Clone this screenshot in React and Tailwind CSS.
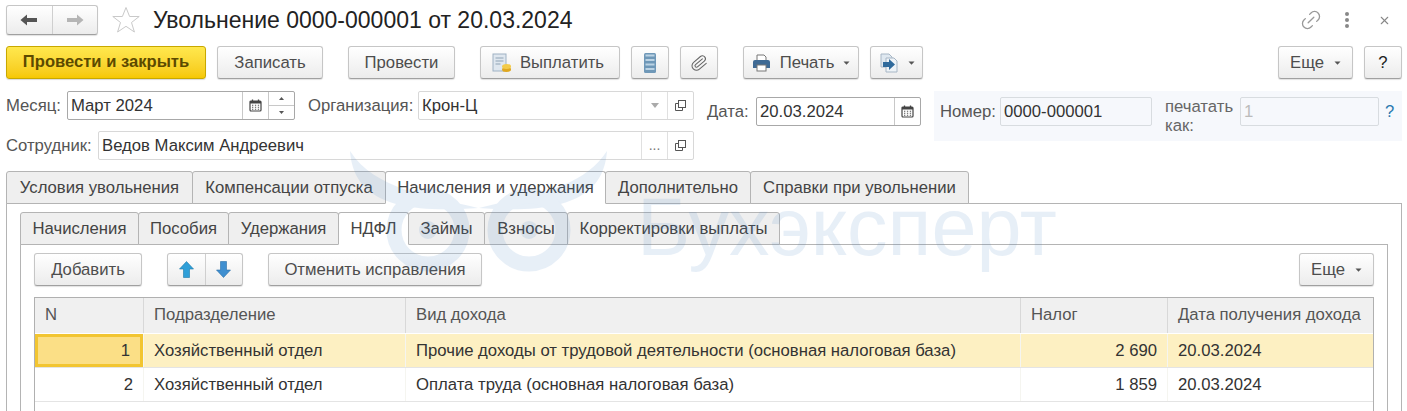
import { Link2, Paperclip, X } from "lucide-react";

const Caret = ({ className = "" }) => (
  <svg width="7" height="4" viewBox="0 0 7 4" className={className}>
    <path d="M0.5 0.5h6L3.5 3.8z" fill="#555" />
  </svg>
);

const Btn = ({ className = "", children }) => (
  <div
    className={`h-[33px] flex items-center justify-center shrink-0 rounded-[3px] border border-[#c6c6c6] border-b-[#a0a0a0] bg-gradient-to-b from-white to-[#ececec] text-[#4d4d4d] shadow-[0_1px_1px_rgba(0,0,0,0.12)] ${className}`}
  >
    {children}
  </div>
);

const CalendarIcon = () => (
  <svg width="13" height="13" viewBox="0 0 13 13">
    <rect x="1" y="2" width="11" height="10" rx="1" fill="none" stroke="#444" strokeWidth="1.2" />
    <rect x="1" y="2" width="11" height="2.5" fill="#444" />
    <path d="M3.5 0.5v2.5M9.5 0.5v2.5" stroke="#444" strokeWidth="1.3" />
    <path d="M3 6.2h1.3M5.9 6.2h1.3M8.8 6.2h1.3M3 8.2h1.3M5.9 8.2h1.3M8.8 8.2h1.3M3 10.2h1.3M5.9 10.2h1.3M8.8 10.2h1.3" stroke="#555" strokeWidth="1.1" />
  </svg>
);

const OpenIcon = () => (
  <svg width="13" height="13" viewBox="0 0 13 13" fill="none" stroke="#555" strokeWidth="1">
    <rect x="4.5" y="1.5" width="7" height="7" />
    <path d="M4.5 4.5h-3v7h7v-3" />
  </svg>
);

const Label = ({ className = "", children }) => (
  <span className={`text-[#555] shrink-0 ${className}`}>{children}</span>
);

const tabsOuter = [
  { name: "Условия увольнения", w: "w-[187px]" },
  { name: "Компенсации отпуска", w: "w-[194px]" },
  { name: "Начисления и удержания", w: "w-[221px]", active: true },
  { name: "Дополнительно", w: "w-[146px]" },
  { name: "Справки при увольнении", w: "w-[219px]" },
];

const tabsInner = [
  { name: "Начисления", w: "w-[119px]" },
  { name: "Пособия", w: "w-[91px]" },
  { name: "Удержания", w: "w-[111px]" },
  { name: "НДФЛ", w: "w-[71px]", active: true },
  { name: "Займы", w: "w-[77px]" },
  { name: "Взносы", w: "w-[84px]" },
  { name: "Корректировки выплаты", w: "w-[213px]" },
];

const Tab = ({ name, w, active }) => (
  <div
    className={`h-[33px] -mr-px shrink-0 flex items-center justify-center rounded-t-[3px] border border-[#b4b4b4] text-[#444] ${w} ${
      active ? "bg-white border-b-white relative z-10" : "bg-[#efefef]"
    }`}
  >
    {name}
  </div>
);

const rows = [
  {
    n: 1,
    dep: "Хозяйственный отдел",
    kind: "Прочие доходы от трудовой деятельности (основная налоговая база)",
    tax: "2 690",
    date: "20.03.2024",
    active: true,
  },
  {
    n: 2,
    dep: "Хозяйственный отдел",
    kind: "Оплата труда (основная налоговая база)",
    tax: "1 859",
    date: "20.03.2024",
  },
];

// полупрозрачный водяной знак поверх формы
const Watermark = () => (
  <div className="absolute inset-0 pointer-events-none z-20 opacity-[0.12] text-[#3f7fc4]">
    <svg width="270" height="125" viewBox="0 0 270 125" fill="none" className="absolute left-[345px] top-[150px]">
      <path d="M5 1C8 38 32 66 133 58C85 46 30 40 5 1z" fill="#3f7fc4" />
      <path d="M262 1C259 38 235 66 134 58C182 46 237 40 262 1z" fill="#3f7fc4" />
      <circle cx="83" cy="80" r="34" stroke="#3f7fc4" strokeWidth="15" />
      <circle cx="184" cy="80" r="34" stroke="#3f7fc4" strokeWidth="15" />
      <circle cx="83" cy="80" r="9" fill="#3f7fc4" />
      <circle cx="184" cy="80" r="9" fill="#3f7fc4" />
    </svg>
    <span className="absolute left-[637px] top-[187px] text-[81px] leading-none whitespace-nowrap">Бухэксперт</span>
  </div>
);

export default function App() {
  return (
    <div className="relative w-[1407px] h-[411px] overflow-hidden bg-white font-['Liberation_Sans',Arial,sans-serif] text-[16.7px] text-[#333]">
      <Watermark />

      {/* header */}
      <div className="flex items-center h-[30px] mt-[5px] pl-[6px]">
        <div className="flex h-[30px] w-[92px] rounded-[3px] border border-[#c6c6c6] border-b-[#a0a0a0] bg-gradient-to-b from-white to-[#ececec] shadow-[0_1px_1px_rgba(0,0,0,0.12)]">
          <div className="flex-1 flex items-center justify-center border-r border-[#cfcfcf]">
            <svg width="18" height="12" viewBox="0 0 18 12"><path d="M0.5 6L7 0.5V4H17V8H7V11.5z" fill="#555" /></svg>
          </div>
          <div className="flex-1 flex items-center justify-center">
            <svg width="18" height="12" viewBox="0 0 18 12"><path d="M17.5 6L11 0.5V4H1V8H11V11.5z" fill="#b5b5b5" /></svg>
          </div>
        </div>
        <svg width="30" height="28" viewBox="0 0 30 28" className="ml-[13px]" fill="none">
          <path d="M15 1.5l3.6 9h9.6l-7.7 6 2.9 9.5-8.4-5.7-8.4 5.7 2.9-9.5-7.7-6h9.6z" stroke="#c9c9c9" />
        </svg>
        <div className="ml-[12px] text-[23px] leading-none text-[#222]">Увольнение 0000-000001 от 20.03.2024</div>
        <div className="ml-auto flex items-center pr-[16px]">
          <Link2 size={24} strokeWidth={1.3} color="#999" className="-rotate-45" />
          <div className="ml-[22px] flex flex-col gap-[2px]">
            <span className="w-[4px] h-[4px] rounded-full bg-[#888]" />
            <span className="w-[4px] h-[4px] rounded-full bg-[#888]" />
            <span className="w-[4px] h-[4px] rounded-full bg-[#888]" />
          </div>
          <X size={13} strokeWidth={2} color="#888" className="ml-[29px]" />
        </div>
      </div>

      {/* command bar */}
      <div className="flex mt-[11px] pl-[6px] pr-[5px]">
        <div className="w-[200px] h-[33px] flex items-center justify-center rounded-[3px] border border-[#c8a800] bg-gradient-to-b from-[#ffe84d] to-[#f6c800] font-bold text-[16.6px] text-[#5c4a00] shadow-[0_1px_1px_rgba(0,0,0,0.15)]">
          Провести и закрыть
        </div>
        <Btn className="w-[106px] ml-[11px]">Записать</Btn>
        <Btn className="w-[107px] ml-[25px]">Провести</Btn>
        <Btn className="w-[140px] ml-[25px] gap-[8px] pr-[4px]">
          <svg width="20" height="20" viewBox="0 0 20 20">
            <rect x="1" y="1" width="13" height="17" fill="#dfe7ef" stroke="#9fb2c4" />
            <path d="M3.5 5h8M3.5 8h8M3.5 11h5" stroke="#8fa3b5" />
            <ellipse cx="14.5" cy="16.5" rx="4.5" ry="2.5" fill="#e0a820" />
            <ellipse cx="14.5" cy="13.5" rx="4.5" ry="2.5" fill="#f3cb4a" />
          </svg>
          Выплатить
        </Btn>
        <Btn className="w-[38px] ml-[11px]">
          <svg width="12" height="20" viewBox="0 0 12 20">
            <rect x="0" y="0" width="12" height="20" rx="1.5" fill="#6f98b8" />
            <path d="M1.5 2.5h9M1.5 7h9M1.5 11.5h9M1.5 16h9" stroke="#bcd3e4" strokeWidth="2" />
          </svg>
        </Btn>
        <Btn className="w-[38px] ml-[11px]">
          <Paperclip size={18} strokeWidth={1.4} color="#666" className="rotate-[5deg]" />
        </Btn>
        <Btn className="w-[116px] ml-[25px]">
          <svg width="19" height="18" viewBox="0 0 19 18" className="mr-[9px]">
            <path d="M5 1h7l2 2v4H5z" fill="#fff" stroke="#777" />
            <path d="M1 8q0-2 2-2h13q2 0 2 2v6H1z" fill="#3f6a94" />
            <rect x="5" y="11" width="9" height="6" fill="#fff" stroke="#777" />
          </svg>
          Печать
          <Caret className="ml-[9px]" />
        </Btn>
        <Btn className="w-[53px] ml-[11px]">
          <svg width="20" height="20" viewBox="0 0 20 20" className="mr-[9px]">
            <path d="M2 1h8l3 3v10H2z" fill="#dfe8f0" stroke="#a7b6c5" />
            <path d="M7 5h8l3 3v11H7z" fill="#eef3f7" stroke="#a7b6c5" />
            <path d="M4 9h6V6l6 5.5-6 5.5v-3H4z" fill="#2f6a9c" />
          </svg>
          <Caret />
        </Btn>
        <Btn className="w-[75px] ml-auto">
          Еще
          <Caret className="ml-[10px]" />
        </Btn>
        <Btn className="w-[38px] ml-[11px] text-[#222]">?</Btn>
      </div>

      {/* fields */}
      <div className="flex mt-[12px] pl-[6px]">
        <div className="w-[688px] shrink-0 flex flex-col gap-[11px]">
          <div className="flex items-center h-[29px]">
            <Label className="w-[61px]">Месяц:</Label>
            <div className="w-[228px] h-[29px] flex rounded-[2px] border border-[#a8a8a8]">
              <span className="flex-1 pl-[3px] leading-[27px] text-[#333]">Март 2024</span>
              <div className="w-[26px] border-l border-[#c8c8c8] flex items-center justify-center"><CalendarIcon /></div>
              <div className="w-[26px] border-l border-[#c8c8c8] flex flex-col">
                <div className="flex-1 flex items-center justify-center border-b border-[#c8c8c8]">
                  <svg width="5" height="3" viewBox="0 0 5 3"><path d="M0 3L2.5 0 5 3z" fill="#555" /></svg>
                </div>
                <div className="flex-1 flex items-center justify-center">
                  <svg width="5" height="3" viewBox="0 0 5 3"><path d="M0 0L2.5 3 5 0z" fill="#555" /></svg>
                </div>
              </div>
            </div>
            <Label className="ml-[13px] w-[110px]">Организация:</Label>
            <div className="flex-1 h-[29px] flex rounded-[2px] border border-[#d8d8d8]">
              <span className="flex-1 pl-[3px] leading-[27px]">Крон-Ц</span>
              <div className="w-[26px] border-l border-[#e0e0e0] flex items-center justify-center">
                <svg width="8" height="5" viewBox="0 0 8 5"><path d="M0 0h8L4 5z" fill="#aaa" /></svg>
              </div>
              <div className="w-[26px] border-l border-[#e0e0e0] flex items-center justify-center"><OpenIcon /></div>
            </div>
          </div>
          <div className="flex items-center h-[29px]">
            <Label className="w-[92px]">Сотрудник:</Label>
            <div className="flex-1 h-[29px] flex rounded-[2px] border border-[#d8d8d8]">
              <span className="flex-1 pl-[3px] leading-[27px]">Ведов Максим Андреевич</span>
              <div className="w-[26px] border-l border-[#e0e0e0] flex items-center justify-center text-[#777] text-[14px]">...</div>
              <div className="w-[26px] border-l border-[#e0e0e0] flex items-center justify-center"><OpenIcon /></div>
            </div>
          </div>
        </div>

        <div className="flex items-center h-[29px] ml-[13px] mt-[6px]">
          <Label className="w-[49px]">Дата:</Label>
          <div className="w-[165px] h-[29px] flex rounded-[2px] border border-[#a8a8a8]">
            <span className="flex-1 pl-[3px] leading-[27px]">20.03.2024</span>
            <div className="w-[26px] border-l border-[#c8c8c8] flex items-center justify-center"><CalendarIcon /></div>
          </div>
        </div>

        <div className="ml-[13px] w-[468px] h-[50px] bg-[#f6f8fc] flex pl-[6px] pt-[6px] items-start">
          <Label className="w-[60px] leading-[29px]">Номер:</Label>
          <div className="w-[152px] h-[29px] rounded-[2px] border border-[#d8dce0] pl-[3px] leading-[27px]">0000-000001</div>
          <div className="ml-[13px] w-[75px] leading-[19px] text-[#666]">печатать как:</div>
          <div className="w-[139px] h-[29px] rounded-[2px] border border-[#d8dce0] pl-[3px] leading-[27px] text-[#bbb]">1</div>
          <span className="ml-[6px] leading-[29px] text-[#2a7ab0]">?</span>
        </div>
      </div>

      {/* tabs */}
      <div className="flex pl-[6px] mt-[11px] relative z-10 -mb-px">
        {tabsOuter.map((t) => <Tab key={t.name} {...t} />)}
      </div>
      <div className="ml-[6px] w-[1396px] h-[300px] border border-[#b4b4b4] px-[13px] pt-[8px]">
        <div className="flex relative z-10 -mb-px">
          {tabsInner.map((t) => <Tab key={t.name} {...t} />)}
        </div>
        <div className="h-[300px] border border-[#b4b4b4] px-[13px] pt-[8px]">
          <div className="flex">
            <Btn className="w-[108px]">Добавить</Btn>
            <div className="ml-[25px] w-[76px] h-[33px] flex rounded-[3px] border border-[#c6c6c6] border-b-[#a0a0a0] bg-gradient-to-b from-white to-[#ececec] shadow-[0_1px_1px_rgba(0,0,0,0.12)]">
              <div className="flex-1 flex items-center justify-center border-r border-[#cfcfcf]">
                <svg width="15" height="17" viewBox="0 0 15 17"><path d="M7.5 0.5L14.5 8H10.5V16.5H4.5V8H0.5z" fill="#2f9fd8" stroke="#1d78a8" strokeWidth="0.6" /></svg>
              </div>
              <div className="flex-1 flex items-center justify-center">
                <svg width="15" height="17" viewBox="0 0 15 17"><path d="M7.5 16.5L14.5 9H10.5V0.5H4.5V9H0.5z" fill="#3f8fd0" stroke="#2a6ea8" strokeWidth="0.6" /></svg>
              </div>
            </div>
            <Btn className="w-[214px] ml-[25px]">Отменить исправления</Btn>
            <Btn className="w-[75px] ml-auto">
              Еще
              <Caret className="ml-[10px]" />
            </Btn>
          </div>

          <div className="mt-[11px] h-[200px] border border-[#b0b0b0] border-b-0">
            <div className="grid grid-cols-[108px_262px_615px_147px_206px] h-[36px] bg-[#f0f0f0] border-b border-white text-[#555]">
              <div className="pl-[10px] leading-[33px]">N</div>
              <div className="pl-[10px] leading-[33px] border-l border-[#d8d8d8]">Подразделение</div>
              <div className="pl-[10px] leading-[33px] border-l border-[#d8d8d8]">Вид дохода</div>
              <div className="pl-[10px] leading-[33px] border-l border-[#d8d8d8]">Налог</div>
              <div className="pl-[10px] leading-[33px] border-l border-[#d8d8d8]">Дата получения дохода</div>
            </div>
            {rows.map((r) => (
              <div
                key={r.n}
                className={`grid grid-cols-[108px_262px_615px_147px_206px] h-[34px] border-b border-[#e4e4e4] leading-[33px] ${
                  r.active ? "bg-[#fdf0c2]" : "bg-white"
                }`}
              >
                <div className={`text-right pr-[10px] ${r.active ? "bg-[#fbdf86] border-[3px] border-[#f2c531] leading-[27px] pr-[7px]" : ""}`}>{r.n}</div>
                <div className="pl-[10px] border-l border-[#f5f5f0]">{r.dep}</div>
                <div className="pl-[10px] border-l border-[#f5f5f0]">{r.kind}</div>
                <div className="text-right pr-[10px] border-l border-[#f5f5f0]">{r.tax}</div>
                <div className="pl-[10px] border-l border-[#f5f5f0]">{r.date}</div>
              </div>
            ))}
          </div>
        </div>
      </div>
    </div>
  );
}
